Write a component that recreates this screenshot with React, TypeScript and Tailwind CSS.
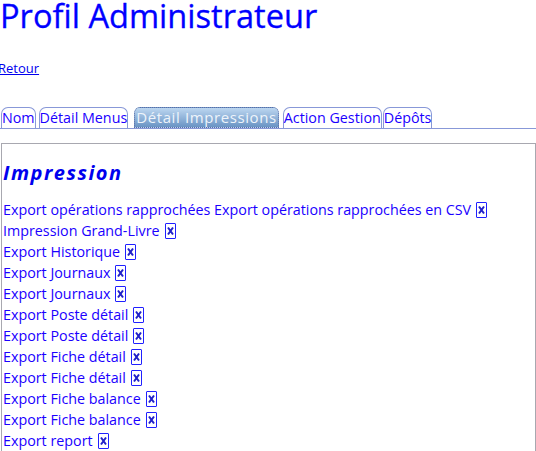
import React from "react";

const TABS = [
  { label: "Nom", gap: "mr-[3px]" },
  { label: "Détail Menus", gap: "mr-[6px]" },
  { label: "Détail Impressions", gap: "mr-[4px]" },
  { label: "Action Gestion", gap: "mr-[1px]" },
  { label: "Dépôts", gap: "mr-[1px]" },
];
const ACTIVE = "Détail Impressions";

const ITEMS = [
  "Export opérations rapprochées Export opérations rapprochées en CSV",
  "Impression Grand-Livre",
  "Export Historique",
  "Export Journaux",
  "Export Journaux",
  "Export Poste détail",
  "Export Poste détail",
  "Export Fiche détail",
  "Export Fiche détail",
  "Export Fiche balance",
  "Export Fiche balance",
  "Export report",
];

function RemoveButton() {
  return (
    <span className="ml-[5px] inline-flex h-[16px] w-[11px] shrink-0 items-center justify-center rounded-[1px] border border-[#2020ff]">
      <svg width="7" height="10" viewBox="0 0 7 10">
        <path d="M1 1.5 L6 8.5 M6 1.5 L1 8.5" stroke="#2020c8" strokeWidth="2" fill="none" />
      </svg>
    </span>
  );
}

export default function App() {
  return (
    <div className="h-[451px] w-[536px] overflow-hidden bg-white font-['Open_Sans',sans-serif] text-[#1a00ff]">
      <h1 className="m-0 pt-[1px] text-[32.6px] leading-[29px] text-[#0000ff] [-webkit-text-stroke:0.3px_#0000ff]">
        Profil Administrateur
      </h1>

      <div className="mt-[29px] text-[13px] leading-[18px]">
        <a href="#" className="ml-[-2px] text-[#0000ee] underline">
          Retour
        </a>
      </div>

      <div className="mt-[30px] flex items-end border-b border-[#8898d8] pl-[1px]">
        {TABS.map((t) =>
          t.label === ACTIVE ? (
            <span
              key={t.label}
              className={`${t.gap} rounded-t-[6px] border border-dotted border-[#5a6ea8] bg-gradient-to-b from-[#bcd6f0] to-[#6a94c4] px-[1px] text-[15px] leading-[19px] tracking-[0.6px] text-[#eef4fb]`}
            >
              {t.label}
            </span>
          ) : (
            <span
              key={t.label}
              className={`${t.gap} rounded-t-[7px] border border-b-0 border-[#8898d8] bg-white px-0 text-[14.3px] leading-[20px] text-[#1a00ff]`}
            >
              {t.label}
            </span>
          ),
        )}
      </div>

      <div className="ml-[1px] mt-[14px] border border-[#a8a8b0] pl-[1px] pt-[15px]">
        <h2 className="m-0 text-[20px] font-bold italic leading-[28px] tracking-[1.5px] text-[#0000ee]">Impression</h2>
        <ul className="mt-[12px] text-[14.3px]">
          {ITEMS.map((it, i) => (
            <li key={i} className="flex h-[21px] items-center whitespace-nowrap">
              {it}
              <RemoveButton />
            </li>
          ))}
        </ul>
      </div>
    </div>
  );
}
